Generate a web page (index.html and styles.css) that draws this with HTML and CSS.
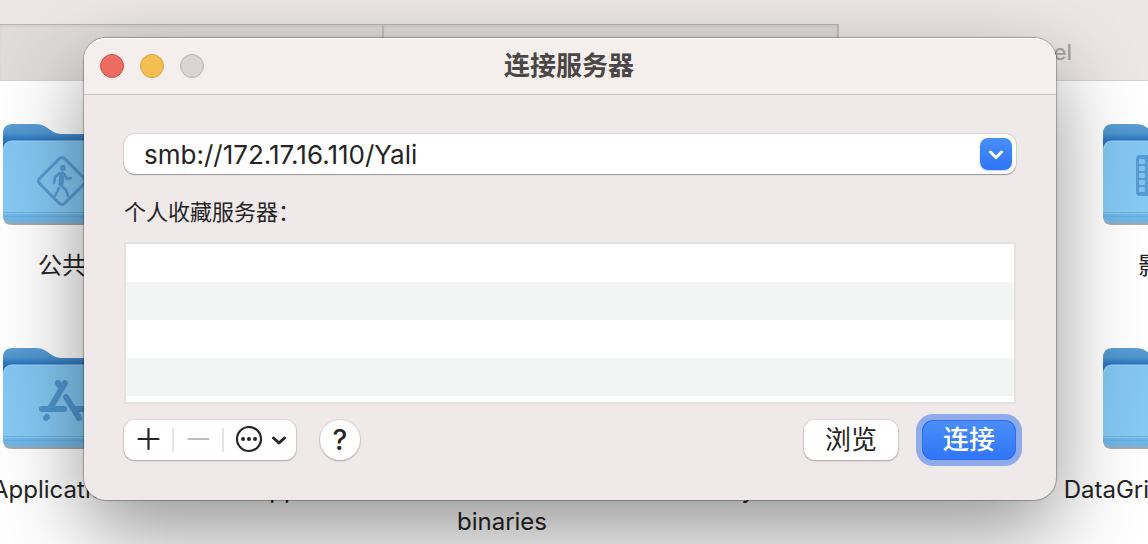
FILE: index.html
```html
<!DOCTYPE html>
<html lang="zh-CN">
<head>
<meta charset="utf-8">
<title>连接服务器</title>
<link rel="stylesheet" href="styles.css">
</head>
<body>
<svg class="defs" aria-hidden="true">
  <defs>
    <linearGradient id="back" x1="0" y1="0" x2="0" y2="1">
      <stop offset="0" stop-color="#5b9fd2"/><stop offset=".12" stop-color="#4c94cd"/><stop offset=".2" stop-color="#2e74bd"/>
    </linearGradient>
    <linearGradient id="front" x1="0" y1="0" x2="0" y2="1">
      <stop offset="0" stop-color="#83c6f1"/><stop offset="1" stop-color="#86caf5"/>
    </linearGradient>
    <symbol id="folder" viewBox="0 0 120 104">
      <path d="M1 13Q1 2 11 2H34Q40 2 44 5L50 9Q54 12 60 12H109Q119 12 119 22V93Q119 102 110 102H10Q1 102 1 93Z" fill="#000" opacity=".35"/>
      <path d="M1 11Q1 1 10 1H34Q40 1 44 4L50 8Q54 11 60 11H110Q119 11 119 20V80H1Z" fill="url(#back)"/>
      <path d="M1 27Q1 18 10 18H110Q119 18 119 27V91Q119 100 110 100H10Q1 100 1 91Z" fill="url(#front)"/>
      <path d="M2 26Q3 18 10 18H110Q117 18 118 26" fill="none" stroke="#9ad3f6"/>
      <path d="M1 91H119Q119 100 110 100H10Q1 100 1 91Z" fill="#70b6e5"/>
      <path d="M1 89.500H119M1 93.500H119" stroke="#68b0e2"/>
    </symbol>
  </defs>
</svg>
<main class="finder">
  <header class="toolbar">
    <div class="tabs"><span class="tab"></span><span class="tab"></span></div>
    <span class="cancel">Cancel</span>
  </header>
  <div class="files">
    <div class="file">
      <svg class="folder" viewBox="0 0 120 104"><use href="#folder"/>
        <g fill="none" stroke="#559dd3" stroke-linecap="round" stroke-linejoin="round">
          <path d="M57 36Q60 33 63 36L82 55Q85 58 82 61L63 80Q60 83 57 80L38 61Q35 58 38 55Z" stroke-width="3"/>
          <path d="M60 51L58 61L64 67L66 73M57 65L53 73M58 50L53 54L52 60M62 51L65 56L69 55" stroke-width="2.500"/>
          <path d="M60 51L59 61" stroke-width="5"/>
        </g><circle cx="61" cy="45" r="3" fill="#559dd3"/>
      </svg>
      <span class="name">公共</span>
    </div>
    <div class="file"></div>
    <div class="file"></div>
    <div class="file"></div>
    <div class="file"></div>
    <div class="file">
      <svg class="folder" viewBox="0 0 120 104"><use href="#folder"/>
        <rect x="34" y="32" width="52" height="41" rx="4" fill="#559dd3"/>
        <g fill="#82c3ee"><rect x="37" y="36" width="6" height="5" rx="1"/><rect x="37" y="43" width="6" height="5" rx="1"/><rect x="37" y="50" width="6" height="5" rx="1"/><rect x="37" y="57" width="6" height="5" rx="1"/><rect x="37" y="64" width="6" height="5" rx="1"/><rect x="46" y="35" width="28" height="16" rx="2"/><rect x="46" y="54" width="28" height="16" rx="2"/></g>
      </svg>
      <span class="name">影片</span>
    </div>
    <div class="file">
      <svg class="folder" viewBox="0 0 120 104"><use href="#folder"/>
        <g fill="none" stroke="#4f97cf" stroke-width="6" stroke-linecap="round">
          <path d="M63 36L49 60M56 36L58 39M40 62H62M74 62H81M45 70L44 71"/>
          <path d="M64 50L77 71"/>
        </g>
      </svg>
      <span class="name">Applications</span>
    </div>
    <div class="file"><svg class="folder" viewBox="0 0 120 104"><use href="#folder"/></svg><span class="name">Apps</span></div>
    <div class="file"><svg class="folder" viewBox="0 0 120 104"><use href="#folder"/></svg><span class="name">Alfred<br>binaries</span></div>
    <div class="file"><svg class="folder" viewBox="0 0 120 104"><use href="#folder"/></svg><span class="name">Linkly</span></div>
    <div class="file"></div>
    <div class="file"><svg class="folder" viewBox="0 0 120 104"><use href="#folder"/></svg><span class="name">DataGrip 2021.1.3</span></div>
  </div>
</main>

<form class="dialog" role="dialog" aria-labelledby="title">
  <header class="titlebar">
    <div class="lights">
      <button type="button" class="light close" aria-label="关闭"></button>
      <button type="button" class="light minimize" aria-label="最小化"></button>
      <button type="button" class="light zoom" aria-label="缩放" disabled></button>
    </div>
    <h1 class="title" id="title">连接服务器</h1>
  </header>
  <div class="content">
    <div class="combo">
      <input class="address" type="text" value="smb://172.17.16.110/Yali" aria-label="服务器地址" spellcheck="false">
      <button type="button" class="drop" aria-label="最近使用的服务器">
        <svg width="32" height="32" viewBox="0 0 32 32"><path d="M10.500 14L16 19.500L21.500 14" fill="none" stroke="#fff" stroke-width="3" stroke-linecap="round" stroke-linejoin="round"/></svg>
      </button>
    </div>
    <h2 class="label" id="favorites">个人收藏服务器：</h2>
    <div class="list" role="listbox" aria-labelledby="favorites" tabindex="0"></div>
    <div class="actions">
      <div class="segments">
        <button type="button" class="segment" aria-label="添加"><svg width="24" height="24" viewBox="0 0 24 24"><path d="M12.500 1V21M2.500 11H22.500" stroke="#262626" stroke-width="2.200" stroke-linecap="round"/></svg></button>
        <button type="button" class="segment" aria-label="移除" disabled><svg width="24" height="24" viewBox="0 0 24 24"><path d="M2.500 11H22.500" stroke="#bdbdbd" stroke-width="2.200" stroke-linecap="round"/></svg></button>
        <button type="button" class="segment more" aria-label="更多"><svg width="52" height="28" viewBox="0 0 52 28"><circle cx="15" cy="13" r="12" fill="none" stroke="#262626" stroke-width="2.200"/><g fill="#262626"><circle cx="9" cy="13" r="2"/><circle cx="15" cy="13" r="2"/><circle cx="21" cy="13" r="2"/></g><path d="M39.500 12L45 17L50.500 12" fill="none" stroke="#262626" stroke-width="3" stroke-linecap="round" stroke-linejoin="round"/></svg></button>
      </div>
      <button type="button" class="help" aria-label="帮助">?</button>
      <span class="spacer"></span>
      <button type="button" class="push">浏览</button>
      <button type="submit" class="push primary">连接</button>
    </div>
  </div>
</form>
</body>
</html>
```
FILE: styles.css
```css
* { box-sizing: border-box; }
html, body { height: 100%; }
body {
  margin: 0;
  position: relative;
  overflow: hidden;
  background: #fff;
  color: #242424;
  font-family: Inter, "Noto Sans CJK SC", sans-serif;
}
button, input { font: inherit; color: inherit; border: 0; padding: 0; margin: 0; }
.defs { position: absolute; width: 0; height: 0; }

.finder { height: 100%; overflow: hidden; }
.toolbar {
  display: flex;
  height: 81px;
  padding-right: 76px;
  background: #ece7e4;
  border-bottom: 1px solid #d5d1cf;
}
.tabs {
  display: flex;
  flex: 1;
  margin-top: 24px;
  margin-right: 160px;
  background: #dfdbd8;
  border-top: 1px solid #b9b5b2;
}
.tab { flex: 1; border-right: 2px solid #c2bebb; box-shadow: inset 0 2px 2px rgba(0, 0, 0, .05); }
.tab:first-child { flex: 0 0 384px; }
.cancel {
  padding-top: 38px;
  font-size: 22px;
  line-height: 28px;
  font-weight: 500;
  color: #aaa5a3;
}
.files {
  display: grid;
  grid-template-columns: repeat(6, 220px);
  grid-auto-rows: 224px;
  margin: 42px 0 0 -48px;
}
.file { display: flex; flex-direction: column; align-items: center; }
.folder { width: 120px; height: 104px; flex: none; }
.name {
  margin-top: 23px;
  font-size: 24px;
  line-height: 32px;
  text-align: center;
  white-space: nowrap;
}

.dialog {
  position: absolute;
  top: 38px;
  left: 84px;
  right: 92px;
  border-radius: 22px;
  background: #efe9e9;
  box-shadow: 0 0 1px 1px rgba(0, 0, 0, .28), 0 32px 84px rgba(0, 0, 0, .42);
}
.titlebar {
  display: grid;
  grid-template-columns: 1fr auto 1fr;
  align-items: center;
  height: 57px;
  padding: 0 18px 0 16px;
  background: #f4eeec;
  border-bottom: 1px solid #c9c4c3;
  border-radius: 22px 22px 0 0;
  box-shadow: inset 0 1px 0 #fff;
}
.lights { display: flex; gap: 16px; }
.light { width: 24px; height: 24px; border-radius: 50%; border: 1px solid; }
.close { background: #ed6b60; border-color: #d05247; }
.minimize { background: #f5bf4f; border-color: #d6a243; }
.zoom { background: #d9d4d3; border-color: #b9b5b3; }
.title { margin: 0; font-size: 26px; line-height: 40px; font-weight: 700; color: #4b4646; }
.content { padding: 39px 40px 40px; }
.combo {
  display: flex;
  align-items: center;
  height: 40px;
  padding: 0 4px 0 20px;
  border-radius: 11px;
  background: #fff;
  box-shadow: 0 0 1px 1px rgba(0, 0, 0, .09), 0 1px 1px 0 rgba(0, 0, 0, .3);
}
.address { flex: 1; min-width: 0; height: 40px; padding-top: 1px; background: none; outline: 0; font-size: 26px; }
.drop, .primary { background: linear-gradient(#4a8ff8, #2f74f6); }
.drop { width: 32px; height: 32px; border-radius: 8px; box-shadow: 0 1px 2px rgba(40, 110, 240, .3); }
.drop svg, .segment svg { display: block; }
.label { margin: 24px 0 16px; font-size: 22px; line-height: 28px; font-weight: 400; }
.list {
  height: 162px;
  border: 2px solid #e3e2e2;
  background: repeating-linear-gradient(#fff 0 38px, #f3f5f4 38px 76px);
}
.actions { display: flex; align-items: center; gap: 24px; margin-top: 16px; }
.segments, .help, .push {
  height: 40px;
  border-radius: 11px;
  background: #fff;
  box-shadow: 0 0 1px 1px rgba(0, 0, 0, .07), 0 1px 2px rgba(0, 0, 0, .25);
}
.segments { display: flex; align-items: center; }
.segment {
  display: flex;
  align-items: center;
  justify-content: center;
  width: 50px;
  height: 24px;
  background: none;
  border-right: 2px solid #e4e4e4;
}
.more { width: 72px; border: 0; }
.help { width: 40px; border-radius: 50%; font-size: 28px; line-height: 40px; font-weight: 500; }
.spacer { flex: 1; }
.push { width: 94px; font-size: 26px; line-height: 38px; }
.primary { color: #fff; background: linear-gradient(#4a8ff8, #2f74f6); box-shadow: inset 0 0 0 1px #2f6fee, 0 0 0 6px #8fabeb; font-weight: 500; }
```
